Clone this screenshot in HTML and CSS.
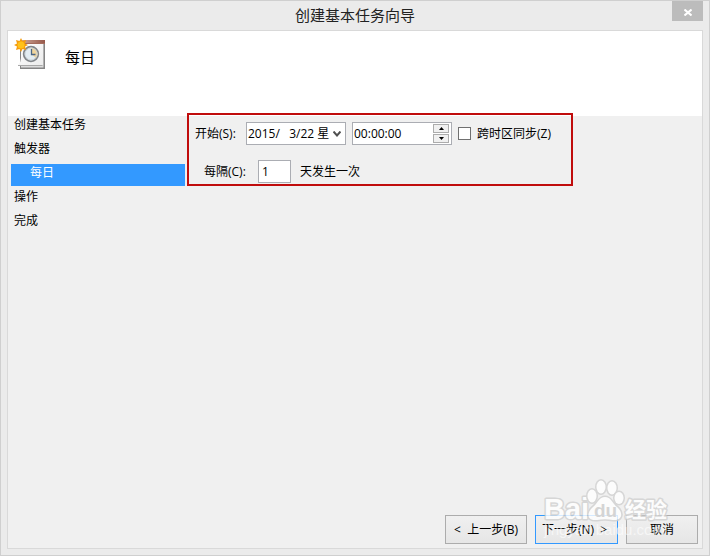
FILE: index.html
```html
<!DOCTYPE html>
<html lang="zh-CN">

<head>
    <meta charset="UTF-8">
    <meta name="viewport" content="width=device-width, initial-scale=1">
    <title>创建基本任务向导</title>
    <link rel="stylesheet" href="styles.css">
</head>

<body>

    <header class="titlebar">
        <h1>创建基本任务向导</h1>
        <button class="close" type="button" aria-label="关闭">
            <svg width="8" height="7" viewBox="0 0 8 7"><path d="M0.5 0.5L7.5 6.5M7.5 0.5L0.5 6.5" stroke="#fff" stroke-width="2" /></svg>
        </button>
    </header>

    <form class="wizard">

        <div class="heading">
            <svg class="icon" width="32" height="32" viewBox="0 0 32 32">
                <defs>
                    <linearGradient id="page" x1="0" y1="0" x2="1" y2="1">
                        <stop offset="0" stop-color="#fff" />
                        <stop offset="1" stop-color="#ececec" />
                    </linearGradient>
                    <linearGradient id="top" x1="0" y1="0" x2="1" y2="0">
                        <stop offset="0" stop-color="#d0a898" />
                        <stop offset="1" stop-color="#96584a" />
                    </linearGradient>
                </defs>
                <path d="M6 5H31V31H6Z" fill="#858585" />
                <path d="M7 5H29.500V29.500H7Z" fill="#dcdcdc" />
                <path d="M7 3H29V27H4Q7 24 7 20Z" fill="url(#page)" />
                <path d="M4 27.500H28.500" fill="none" stroke="#a8a8a8" />
                <path d="M7 2H31V6H7Z" fill="url(#top)" />
                <path d="M7 5.500H31" stroke="#a56c5c" />
                <circle cx="17" cy="16" r="7.300" fill="#e3edf3" stroke="#82868a" stroke-width="1.800" />
                <path d="M17 16V9.700A6.300 6.300 0 0 1 22 20Z" fill="#f0d59c" />
                <circle cx="17" cy="16" r="6" fill="none" stroke="#c8d0d6" stroke-width=".8" />
                <path d="M17.500 11V16.500H21.500" fill="none" stroke="#4b6684" stroke-width="1.300" />
                <path d="M7 0L8.500 3L12 2L11 5.500L14 7L11 8.500L12 12L8.500 11L7 14L5.500 11L2 12L3 8.500L0 7L3 5.500L2 2L5.500 3Z" fill="#f59c0c" />
                <circle cx="7" cy="7" r="3.500" fill="#ffc21a" />
            </svg>
            <h2>每日</h2>
        </div>

        <div class="content">
            <nav class="steps">
                <a href="#task">创建基本任务</a>
                <a href="#trigger">触发器</a>
                <a href="#daily" class="current">每日</a>
                <a href="#action">操作</a>
                <a href="#finish">完成</a>
            </nav>

            <section class="settings">
                <div class="row">
                    <label for="date">开始(S):</label>
                    <div class="date">
                        <select id="date">
                            <option>2015/&nbsp;&nbsp; 3/22 星</option>
                        </select>
                        <svg class="arrow" width="8" height="6" viewBox="0 0 8 6"><path d="M0.500 0.500L4 4.500L7.500 0.500" fill="none" stroke="#505050" stroke-width="2" /></svg>
                    </div>
                    <div class="time">
                        <input type="text" value="00:00:00" aria-label="时间">
                        <div class="spin">
                            <button type="button" aria-label="增加"><svg width="5" height="3" viewBox="0 0 5 3"><path d="M0 3L2.500 0L5 3Z" /></svg></button>
                            <button type="button" aria-label="减少"><svg width="5" height="3" viewBox="0 0 5 3"><path d="M0 0L2.500 3L5 0Z" /></svg></button>
                        </div>
                    </div>
                    <label class="check"><input type="checkbox">跨时区同步(Z)</label>
                </div>
                <div class="row every">
                    <label for="days">每隔(C):</label>
                    <input id="days" type="text" value="1">
                    <span>天发生一次</span>
                </div>
            </section>
        </div>

        <footer class="buttons">
            <button type="button">&lt;&nbsp; 上一步(B)</button>
            <button type="button" class="next">下一步(N)&nbsp; &gt;</button>
            <button type="button" class="cancel">取消</button>

            <svg class="watermark" width="132" height="66" viewBox="0 0 132 66" aria-hidden="true">
                <g class="mark">
                    <text class="latin" x="2" y="41">Bai</text>
                    <ellipse cx="50" cy="18" rx="4.500" ry="6.500" />
                    <ellipse cx="59" cy="9" rx="4.500" ry="6.500" />
                    <ellipse cx="70" cy="10" rx="4.500" ry="6.500" />
                    <ellipse cx="77" cy="20" rx="4.500" ry="6" />
                    <path d="M63 19C69 19 70 25 75 29C82 35 80 43 71 42C66 41 60 41 55 42C45 43 44 35 51 29C56 25 57 19 63 19Z" />
                    <text class="han" x="83" y="39">经验</text>
                </g>
                <text class="du" x="52" y="39">du</text>
                <text class="url" x="2" y="57">jingyan.baidu.com</text>
            </svg>
        </footer>

    </form>

</body>

</html>
```
FILE: styles.css
```css
* {
    box-sizing: border-box;
}

body {
    margin: 0;
    min-height: 100vh;
    display: flex;
    flex-direction: column;
    padding: 0 6px 6px;
    border: 1px solid #cfcfcf;
    background-color: #ebebeb;
    color: #000;
    font: 12px/16px "Open Sans", "Noto Sans CJK SC", sans-serif;
}

button,
input,
select {
    font: inherit;
    color: inherit;
    margin: 0;
    border-radius: 0;
}

h1,
h2 {
    margin: 0;
    font-size: 15px;
    font-weight: 400;
}

.titlebar {
    display: grid;
    grid-template-columns: 31px 1fr 31px;
    height: 29px;
}

.titlebar h1 {
    grid-column: 2;
    line-height: 29px;
    text-align: center;
    color: #222;
}

.close {
    display: flex;
    align-items: center;
    justify-content: center;
    height: 20px;
    padding: 2px 0 0;
    border: 0;
    background-color: #bcbcbc;
}

.wizard {
    flex: 1;
    display: flex;
    flex-direction: column;
    border: 1px solid #d9d9d9;
    background-color: #f0f0f0;
}

.heading {
    display: flex;
    gap: 19px;
    height: 85px;
    padding: 7px 6px;
    background-color: #fff;
}

.heading h2 {
    padding-top: 7px;
    line-height: 24px;
}

.content {
    flex: 1;
    display: flex;
    align-items: flex-start;
    gap: 3px;
}

.steps {
    width: 177px;
    padding-left: 3px;
    display: grid;
    gap: 2px;
}

.steps a {
    height: 22px;
    padding-left: 3px;
    line-height: 18px;
    color: #000;
    text-decoration: none;
}

.steps .current {
    padding-left: 19px;
    background-color: #39f;
    color: #fff;
}

.settings {
    position: relative;
    width: 385px;
    padding: 6px 7px 2px;
    display: grid;
    gap: 15px;
}

/* red frame, reaches up over the heading */
.settings::after {
    content: "";
    position: absolute;
    inset: -3px 0 -1px -1px;
    border: 2px solid #c00c0c;
    pointer-events: none;
}

.row {
    display: flex;
    align-items: center;
    gap: 6px;
}

.row > label:first-child {
    width: 45px;
}

.every {
    gap: 9px;
    padding-left: 9px;
}

.date,
.time,
#days {
    height: 23px;
    border: 1px solid #abadb3;
    background-color: #fff;
}

.date,
.time {
    width: 100px;
    display: flex;
    align-items: center;
}

.date select {
    width: 84px;
    padding: 0 0 0 1px;
    border: 0;
    background: none;
    appearance: none;
}

.arrow {
    margin-left: 2px;
}

.time input {
    flex: 1;
    min-width: 0;
    padding: 0 1px;
    border: 0;
    background: none;
}

.spin {
    display: grid;
    gap: 1px;
    margin-right: 2px;
}

.spin button {
    display: flex;
    align-items: center;
    justify-content: center;
    width: 16px;
    height: 9px;
    padding: 0;
    border: 1px solid #acacac;
    background-color: #f0f0f0;
}

.check {
    display: flex;
    align-items: center;
    gap: 6px;
}

.check input {
    appearance: none;
    width: 13px;
    height: 13px;
    border: 1px solid #707070;
    background-color: #fff;
}

#days {
    width: 33px;
    padding: 0 3px;
}

.buttons {
    position: relative;
    display: flex;
    justify-content: flex-end;
    gap: 8px;
    padding: 4px;
}

.buttons button {
    width: 82px;
    height: 29px;
    padding: 0;
    border: 1px solid #acacac;
    background-image: linear-gradient(#f0f0f0, #e6e6e6);
}

.buttons .next {
    width: 83px;
    padding-right: 4px;
    border-color: #39f;
}

.buttons .cancel {
    width: 72px;
}

.watermark {
    position: absolute;
    right: 28px;
    bottom: 4px;
    pointer-events: none;
}

.mark {
    fill: #fff;
    stroke: #d0d0d0;
    stroke-width: 3px;
    stroke-linejoin: round;
    paint-order: stroke;
    opacity: .8;
}

.latin {
    font: bold 29px "Liberation Sans", sans-serif;
}

.du {
    font: bold 19px "Liberation Sans", sans-serif;
    fill: #d4d4d4;
}

.han {
    font: bold 21px "Noto Sans CJK SC", sans-serif;
}

.url {
    font: 15px "Liberation Sans", sans-serif;
    fill: #fff;
    opacity: .6;
}
```
